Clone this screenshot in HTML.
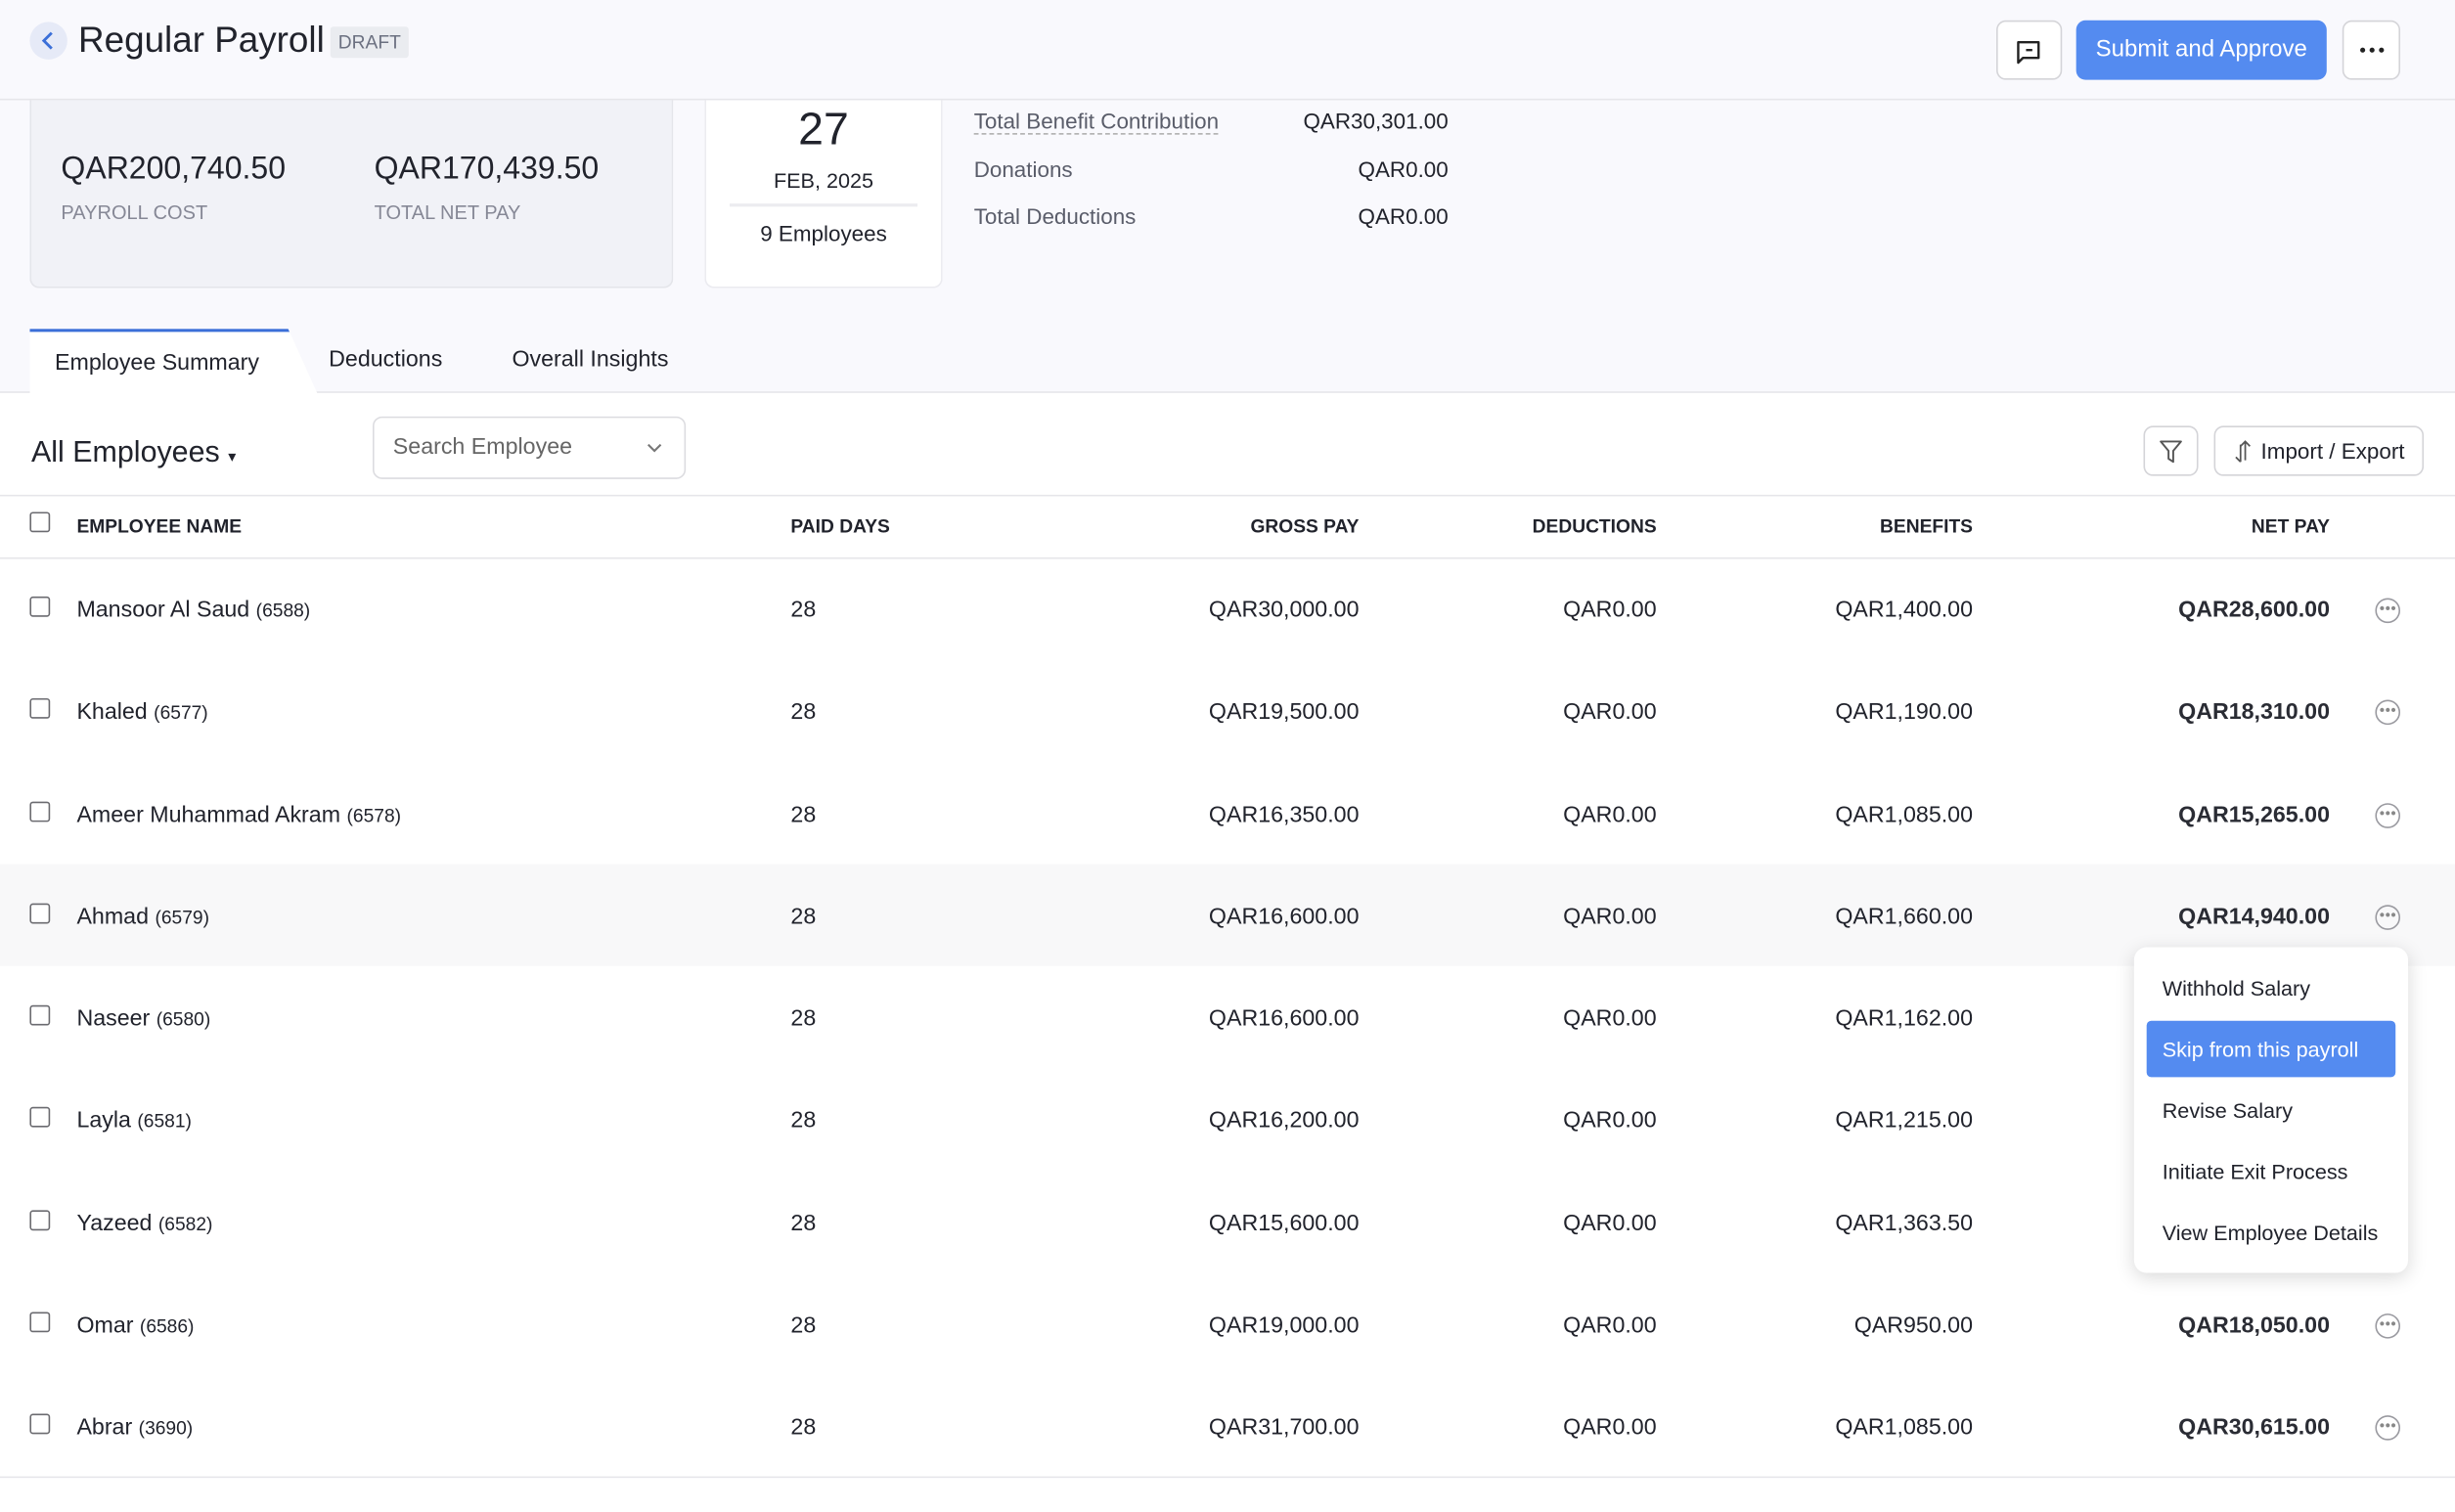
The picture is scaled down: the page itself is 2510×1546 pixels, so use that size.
<!DOCTYPE html>
<html><head><meta charset="utf-8"><style>
*{box-sizing:border-box;margin:0;padding:0}
html,body{width:2510px;height:1546px;overflow:hidden;background:#fff}
#w{width:1568px;height:966px;transform:scale(1.6008);transform-origin:0 0;position:relative;font-family:"Liberation Sans",sans-serif;color:#21232c;font-size:14px}
.a{position:absolute}
.top{left:0;top:0;width:1568px;height:251px;background:#f9f9fd;border-bottom:1px solid #e6e6ea}
.hdr{left:0;top:0;width:1568px;height:64px;border-bottom:1px solid #e6e6ea}
.btn{border:1px solid #d4d4d8;border-radius:6px;background:#fff}
.r{text-align:right}
.cb{width:13px;height:13px;border:1px solid #6b6b70;border-radius:2px;background:#fff}
.th{font-size:12px;font-weight:bold;top:329px}
.circ{width:16px;height:16px;border:1px solid #9a9aa0;border-radius:50%;font-size:6px;line-height:13px;text-align:center;color:#888}
.mi{left:18px;font-size:13.5px}
</style></head><body><div id="w">
<div class="a top"></div>
<div class="a hdr"></div>
<div class="a" style="left:19px;top:14px;width:24px;height:24px;border-radius:50%;background:#e6eaf7"></div>
<svg class="a" style="left:25px;top:19px" width="12" height="14"><path d="M8 2 L3 7 L8 12" stroke="#3b6fd8" stroke-width="1.8" fill="none"/></svg>
<div class="a" style="left:50px;top:12px;font-size:23px">Regular Payroll</div>
<div class="a" style="left:211px;top:17px;background:#eaecf0;color:#6b7080;font-size:12px;padding:3px 5px;border-radius:2px">DRAFT</div>
<div class="a btn" style="left:1275px;top:13px;width:42px;height:38px"></div>
<svg class="a" style="left:1286px;top:24px" width="20" height="20"><path d="M3 3h13v10H6l-3 3z" stroke="#222" stroke-width="1.5" fill="none" stroke-linejoin="round"/><path d="M8 8h4" stroke="#222" stroke-width="1.5"/></svg>
<div class="a" style="left:1326px;top:13px;width:160px;height:38px;background:#548bf0;border-radius:6px;color:#fff;font-size:15px;line-height:38px;text-align:center">Submit and Approve</div>
<div class="a btn" style="left:1496px;top:13px;width:37px;height:38px"></div>
<svg class="a" style="left:1506px;top:29px" width="18" height="6"><circle cx="3" cy="3" r="1.6" fill="#222"/><circle cx="9" cy="3" r="1.6" fill="#222"/><circle cx="15" cy="3" r="1.6" fill="#222"/></svg>
<div class="a" style="left:19px;top:64px;width:411px;height:120px;background:#f1f2f7;border:1px solid #e4e5ea;border-top:0;border-radius:0 0 6px 6px"></div>
<div class="a" style="left:39px;top:97px;font-size:20px">QAR200,740.50</div>
<div class="a" style="left:239px;top:97px;font-size:20px">QAR170,439.50</div>
<div class="a" style="left:39px;top:129px;font-size:12.5px;color:#868896">PAYROLL COST</div>
<div class="a" style="left:239px;top:129px;font-size:12.5px;color:#868896">TOTAL NET PAY</div>
<div class="a" style="left:450px;top:64px;width:152px;height:120px;background:#fff;border:1px solid #ebebf0;border-top:0;border-radius:0 0 6px 6px"></div>
<div class="a" style="left:450px;top:67px;width:152px;text-align:center;font-size:29px">27</div>
<div class="a" style="left:450px;top:108px;width:152px;text-align:center;font-size:13.5px">FEB, 2025</div>
<div class="a" style="left:466px;top:130px;width:120px;height:2px;background:#ececf0"></div>
<div class="a" style="left:450px;top:141px;width:152px;text-align:center;font-size:14px">9 Employees</div>
<div class="a" style="left:622px;top:69px;color:#5a5d6a;border-bottom:1px dashed #aaa">Total Benefit Contribution</div>
<div class="a" style="left:622px;top:100px;color:#5a5d6a">Donations</div>
<div class="a" style="left:622px;top:130px;color:#5a5d6a">Total Deductions</div>
<div class="a r" style="left:800px;width:125px;top:69px">QAR30,301.00</div>
<div class="a r" style="left:800px;width:125px;top:100px">QAR0.00</div>
<div class="a r" style="left:800px;width:125px;top:130px">QAR0.00</div>
<div class="a" style="left:19px;top:210px;width:184px;height:42px;background:#fff;border-top:2px solid #3b6fd8;clip-path:polygon(0 0,165px 0,184px 42px,0 42px)"></div>
<div class="a" style="left:35px;top:224px;font-size:14.5px">Employee Summary</div>
<div class="a" style="left:210px;top:222px;font-size:14.5px">Deductions</div>
<div class="a" style="left:327px;top:222px;font-size:14.5px">Overall Insights</div>
<div class="a" style="left:20px;top:279px;font-size:19px">All Employees <span style="font-size:10px">▾</span></div>
<div class="a btn" style="left:238px;top:266px;width:200px;height:40px;border-color:#dcdce0"></div>
<div class="a" style="left:251px;top:278px;color:#666;font-size:14.5px">Search Employee</div>
<svg class="a" style="left:412px;top:280px" width="12" height="12"><path d="M2 4l4 4 4-4" stroke="#777" stroke-width="1.3" fill="none"/></svg>
<div class="a btn" style="left:1369px;top:272px;width:35px;height:32px"></div>
<svg class="a" style="left:1378px;top:280px" width="18" height="18"><path d="M2 2h13l-5 6v7l-3-2V8z" stroke="#555" stroke-width="1.2" fill="none" stroke-linejoin="round"/></svg>
<div class="a btn" style="left:1414px;top:272px;width:134px;height:32px"></div>
<svg class="a" style="left:1425px;top:279px" width="16" height="18"><path d="M9 15V3M6 6l3-3 3 3M6 5v11M3 13l3 3" stroke="#555" stroke-width="1.1" fill="none"/></svg>
<div class="a" style="left:1444px;top:280px;font-size:14px">Import / Export</div>
<div class="a" style="left:0;top:316px;width:1568px;height:1px;background:#e6e6ea"></div>
<div class="a" style="left:0;top:356px;width:1568px;height:1px;background:#e6e6ea"></div>
<div class="a cb" style="left:19px;top:327px"></div>
<div class="a th" style="left:49px">EMPLOYEE NAME</div>
<div class="a th" style="left:505px">PAID DAYS</div>
<div class="a th r" style="left:700px;width:168px">GROSS PAY</div>
<div class="a th r" style="left:900px;width:158px">DEDUCTIONS</div>
<div class="a th r" style="left:1100px;width:160px">BENEFITS</div>
<div class="a th r" style="left:1300px;width:188px">NET PAY</div>
<div class="a" style="left:0;top:552px;width:1568px;height:65px;background:#f8f8f9"></div>
<div class="a" style="left:0;top:943px;width:1568px;height:1px;background:#e6e6ea"></div>
<div id="rows"></div>
<script>
var d=[["Mansoor Al Saud","6588","30,000.00","1,400.00","28,600.00"],["Khaled","6577","19,500.00","1,190.00","18,310.00"],["Ameer Muhammad Akram","6578","16,350.00","1,085.00","15,265.00"],["Ahmad","6579","16,600.00","1,660.00","14,940.00"],["Naseer","6580","16,600.00","1,162.00",""],["Layla","6581","16,200.00","1,215.00",""],["Yazeed","6582","15,600.00","1,363.50",""],["Omar","6586","19,000.00","950.00","18,050.00"],["Abrar","3690","31,700.00","1,085.00","30,615.00"]];
var h="";d.forEach(function(r,i){var y=382+i*65.25;
h+='<div class="a cb" style="left:19px;top:'+(y-1)+'px"></div>';
h+='<div class="a" style="left:49px;top:'+y+'px;font-size:14.5px">'+r[0]+' <span style="font-size:12px">('+r[1]+')</span></div>';
h+='<div class="a" style="left:505px;top:'+y+'px;font-size:14.5px">28</div>';
h+='<div class="a r" style="left:700px;width:168px;top:'+y+'px;font-size:14.5px">QAR'+r[2]+'</div>';
h+='<div class="a r" style="left:900px;width:158px;top:'+y+'px;font-size:14.5px">QAR0.00</div>';
h+='<div class="a r" style="left:1100px;width:160px;top:'+y+'px;font-size:14.5px">QAR'+r[3]+'</div>';
if(r[4]){h+='<div class="a r" style="left:1300px;width:188px;top:'+y+'px;font-size:14.5px;font-weight:bold;color:#2a2c34">QAR'+r[4]+'</div>';
h+='<div class="a circ" style="left:1517px;top:'+(y)+'px">●●●</div>';}
});document.getElementById("rows").innerHTML=h;
</script>
<div class="a" style="left:1363px;top:605px;width:175px;height:208px;background:#fff;border-radius:8px;box-shadow:0 3px 12px rgba(0,0,0,.15)">
<div class="a mi" style="top:19px">Withhold Salary</div>
<div class="a" style="left:8px;top:47px;width:159px;height:36px;background:#548bf0;border-radius:3px"></div>
<div class="a mi" style="top:58px;color:#fff">Skip from this payroll</div>
<div class="a mi" style="top:97px">Revise Salary</div>
<div class="a mi" style="top:136px">Initiate Exit Process</div>
<div class="a mi" style="top:175px">View Employee Details</div>
</div>
</div></body></html>
